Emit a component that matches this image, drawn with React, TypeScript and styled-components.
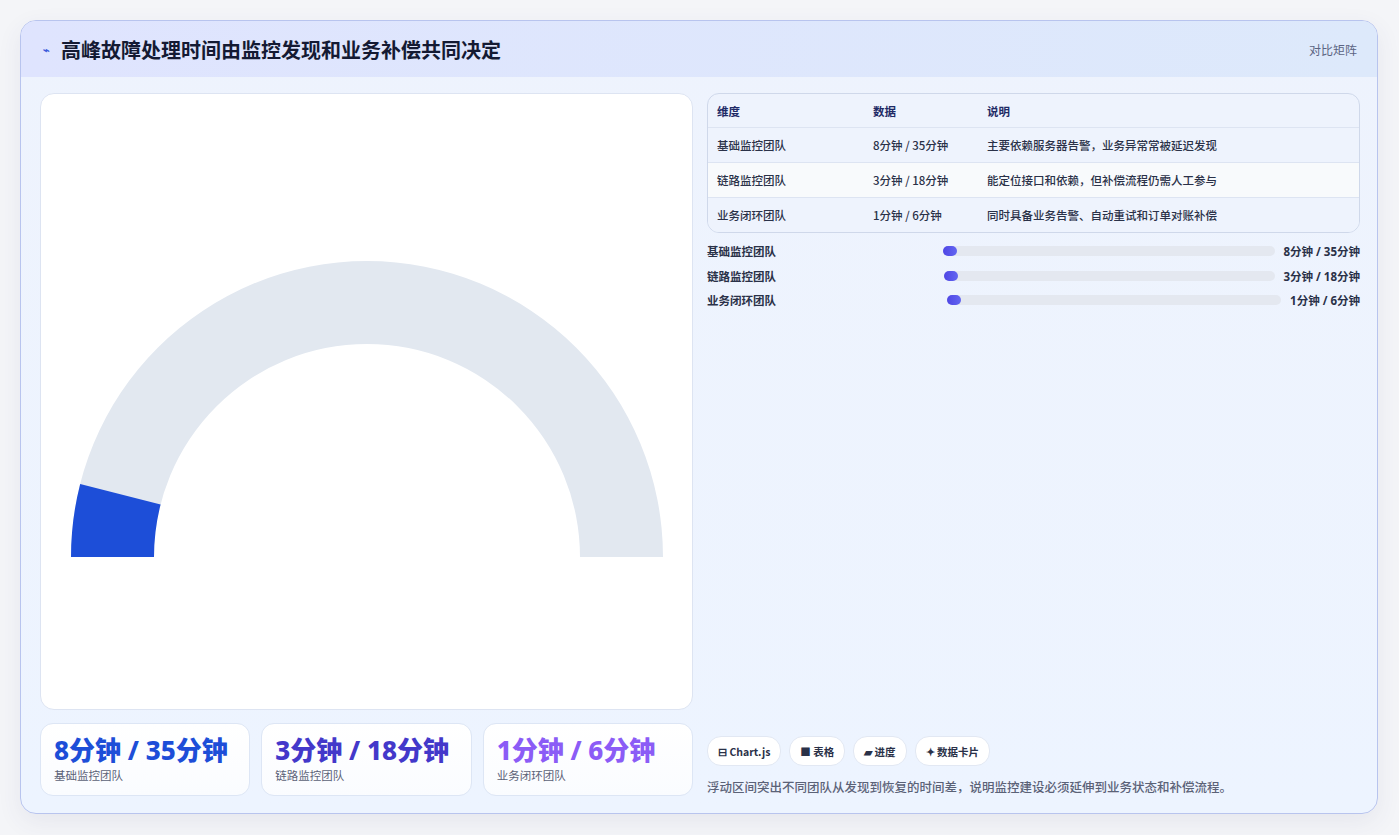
import React from "react";
import styled, { createGlobalStyle } from "styled-components";

const G = createGlobalStyle`
  html,body{margin:0;padding:0;background:#f4f5f8;}
  body{font-family:"Noto Sans CJK SC","Noto Sans",sans-serif;}
`;
const Page = styled.div`padding:20px 21px 21px 20px;height:835px;box-sizing:border-box;`;
const Card = styled.div`
  height:794px;box-sizing:border-box;border:1px solid #b8c4ee;border-radius:16px;overflow:hidden;
  background:linear-gradient(180deg,#eef3fd,#edf4ff);display:flex;flex-direction:column;
  box-shadow:0 8px 24px rgba(60,70,120,.08);
`;
const Header = styled.div`
  height:56px;flex:none;display:flex;align-items:center;justify-content:space-between;padding:0 20px 0 22px;
  background:linear-gradient(90deg,#dfe4fe,#dde9fb);
`;
const Title = styled.h1`margin:0;font-size:20px;font-weight:700;color:#141a33;display:flex;align-items:center;gap:11px;`;
const Bolt = styled.span`color:#3b5bdb;font-size:11px;`;
const HeadRight = styled.span`font-size:12px;color:#5b6482;`;
const Body = styled.div`flex:1;display:grid;grid-template-columns:653px 653px;gap:14px;padding:16px 18px 18px 19px;`;
const Left = styled.div`display:flex;flex-direction:column;gap:13px;`;
const ChartBox = styled.div`height:615px;background:#fff;border:1px solid #dde4f2;border-radius:14px;display:flex;align-items:flex-start;justify-content:center;`;
const Stats = styled.div`display:grid;grid-template-columns:repeat(3,1fr);gap:11px;`;
const Stat = styled.div`height:73px;box-sizing:border-box;border:1px solid #dde6f5;border-radius:13px;background:linear-gradient(180deg,#fff,#fafcff);padding:9px 13px;`;
const StatVal = styled.div<{c:string}>`font-size:26px;font-weight:800;color:${p=>p.c};line-height:34px;font-family:"Noto Sans","Noto Sans CJK SC",sans-serif;`;
const StatLab = styled.div`font-size:11.5px;color:#5b6277;line-height:16px;`;
const Right = styled.div`display:flex;flex-direction:column;`;
const Table = styled.div`border:1px solid #cfd8ea;border-radius:12px;overflow:hidden;background:#eef3fd;`;
const Row = styled.div<{bg?:string;h?:number}>`display:grid;grid-template-columns:156px 114px 1fr;height:${p=>p.h||34}px;align-items:center;padding-left:9px;font-size:11.5px;font-weight:500;color:#2a3148;background:${p=>p.bg||"transparent"};border-top:1px solid #dde4f2;&:first-child{border-top:none;}`;
const Th = styled.span`font-weight:700;color:#1e2a66;`;
const Bars = styled.div`display:flex;flex-direction:column;gap:4.5px;margin-top:8px;`;
const BarRow = styled.div`display:flex;align-items:center;height:20px;font-size:11.5px;font-weight:700;color:#2a3148;`;
const BarLab = styled.span<{w:number}>`width:${p=>p.w}px;flex:none;`;
const Track = styled.div`flex:1;height:10px;border-radius:5px;background:#e4e8f0;position:relative;`;
const Fill = styled.div`position:absolute;left:0;top:0;height:10px;width:14px;border-radius:5px;background:linear-gradient(90deg,#4f46e5,#6366f1);`;
const BarVal = styled.span`margin-left:9px;font-family:"Noto Sans","Noto Sans CJK SC",sans-serif;`;
const Spacer = styled.div`flex:1;`;
const Chips = styled.div`display:flex;gap:8px;`;
const Chip = styled.span`height:28px;padding:0 10px;display:flex;align-items:center;gap:4px;border:1px solid #e2e8f3;border-radius:14px;background:#fff;font-size:10.5px;font-weight:700;color:#2a3148;`;
const Foot = styled.p`margin:11px 0 0;font-size:12.5px;font-weight:500;color:#5b6277;`;

const data = [
  { n: "基础监控团队", v: "8分钟 / 35分钟", d: "主要依赖服务器告警，业务异常常被延迟发现", c: "#1d4ed8", w: 236 },
  { n: "链路监控团队", v: "3分钟 / 18分钟", d: "能定位接口和依赖，但补偿流程仍需人工参与", c: "#4338ca", w: 237 },
  { n: "业务闭环团队", v: "1分钟 / 6分钟", d: "同时具备业务告警、自动重试和订单对账补偿", c: "#8b5cf6", w: 240 },
];

function Gauge() {
  const cx = 326, cy = 463, R = 296, r = 213;
  const a = (14.3 * Math.PI) / 180;
  const p = (rad: number, ang: number) => [cx - rad * Math.cos(ang), cy - rad * Math.sin(ang)];
  const [x1, y1] = p(R, a), [x2, y2] = p(r, a);
  return (
    <svg width="652" height="500">
      <path d={`M${cx - R} ${cy} A${R} ${R} 0 0 1 ${cx + R} ${cy} L${cx + r} ${cy} A${r} ${r} 0 0 0 ${cx - r} ${cy} Z`} fill="#e2e8f0" />
      <path d={`M${cx - R} ${cy} A${R} ${R} 0 0 1 ${x1} ${y1} L${x2} ${y2} A${r} ${r} 0 0 0 ${cx - r} ${cy} Z`} fill="#1d4ed8" />
    </svg>
  );
}

export default function App() {
  return (
    <Page>
      <G />
      <Card>
        <Header>
          <Title><Bolt>⌁</Bolt>高峰故障处理时间由监控发现和业务补偿共同决定</Title>
          <HeadRight>对比矩阵</HeadRight>
        </Header>
        <Body>
          <Left>
            <ChartBox><Gauge /></ChartBox>
            <Stats>
              {data.map(d => (
                <Stat key={d.n}><StatVal c={d.c}>{d.v}</StatVal><StatLab>{d.n}</StatLab></Stat>
              ))}
            </Stats>
          </Left>
          <Right>
            <Table>
              <Row h={33}><Th>维度</Th><Th>数据</Th><Th>说明</Th></Row>
              {data.map((d, i) => (
                <Row key={d.n} bg={i === 1 ? "#f8fafc" : "#eef3fd"}><span>{d.n}</span><span>{d.v}</span><span>{d.d}</span></Row>
              ))}
            </Table>
            <Bars>
              {data.map(d => (
                <BarRow key={d.n}><BarLab w={d.w}>{d.n}</BarLab><Track><Fill /></Track><BarVal>{d.v}</BarVal></BarRow>
              ))}
            </Bars>
            <Spacer />
            <Chips>
              <Chip>⊟ Chart.js</Chip><Chip>■ 表格</Chip><Chip>▰ 进度</Chip><Chip>✦ 数据卡片</Chip>
            </Chips>
            <Foot>浮动区间突出不同团队从发现到恢复的时间差，说明监控建设必须延伸到业务状态和补偿流程。</Foot>
          </Right>
        </Body>
      </Card>
    </Page>
  );
}
